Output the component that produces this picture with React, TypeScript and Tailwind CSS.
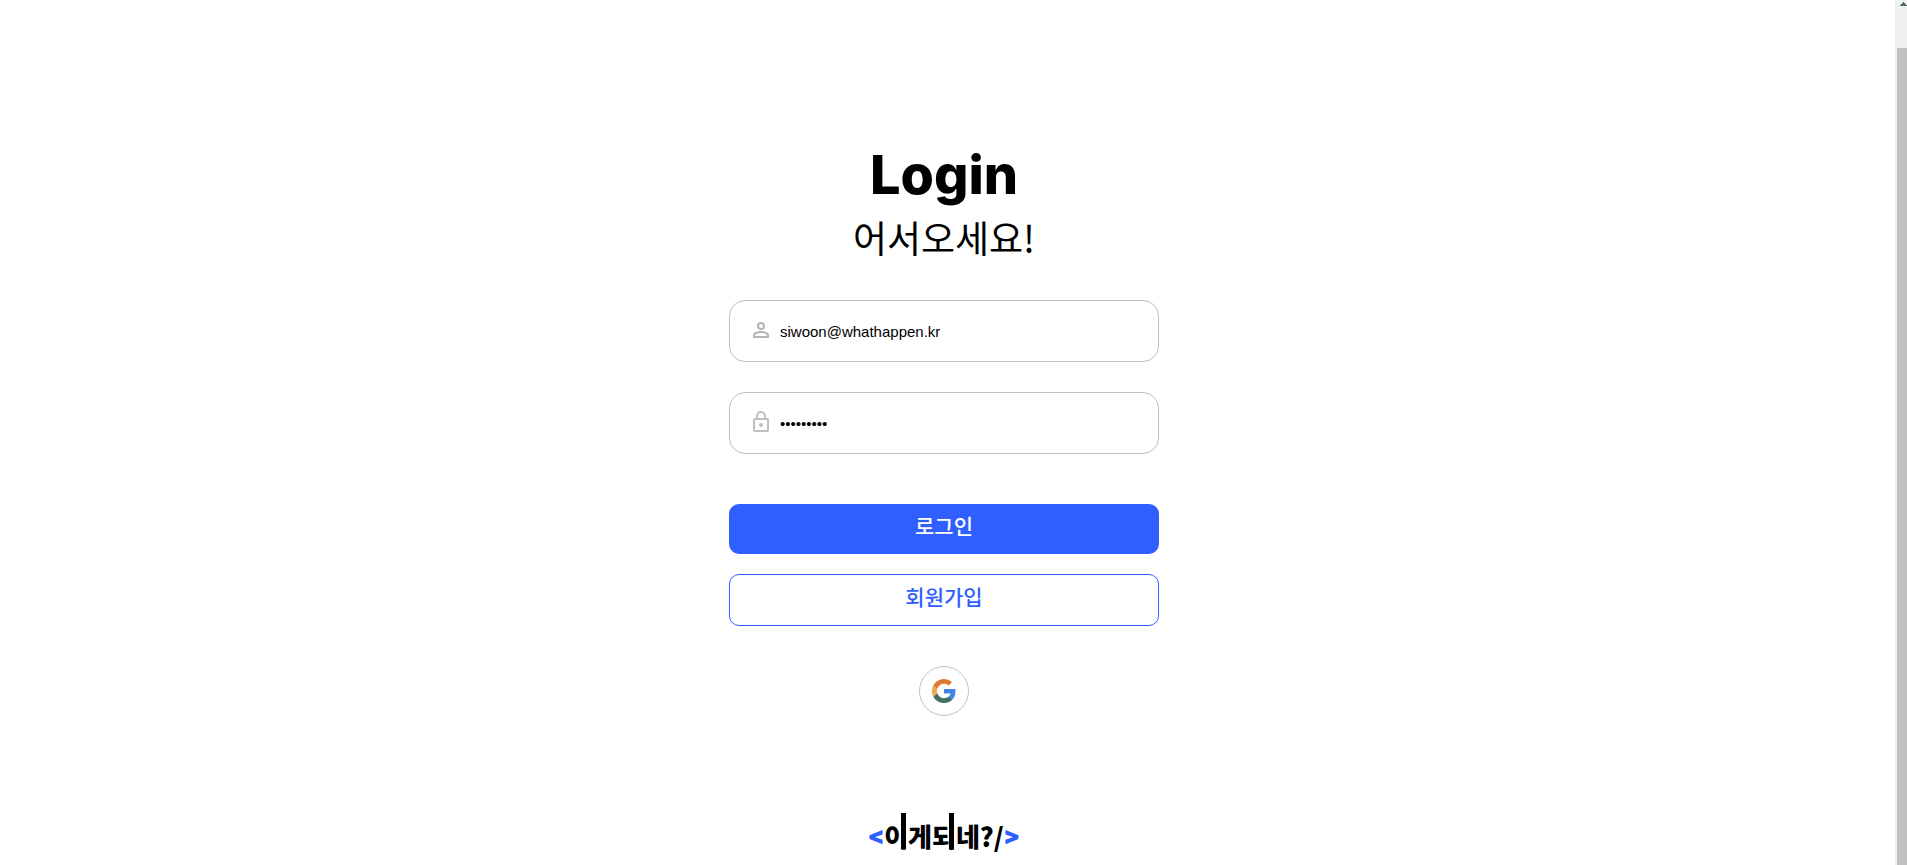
import { useState } from "react";

function PersonIcon() {
  return (
    <svg viewBox="4 4 16 16" className="size-4" fill="#b4b4b4" aria-hidden="true">
      <path d="M12 6a2 2 0 1 1 0 4 2 2 0 0 1 0-4m0 9c2.700 0 5.800 1.290 6 2v1H6v-1c.2-.71 3.300-2 6-2M12 4a4 4 0 1 0 0 8 4 4 0 0 0 0-8m0 9c-2.670 0-8 1.340-8 4v3h16v-3c0-2.660-5.330-4-8-4" />
    </svg>
  );
}

function LockIcon() {
  return (
    <svg viewBox="4 1 16 21" className="h-[21px] w-4" fill="#bfbfbf" aria-hidden="true">
      <path d="M18 8h-1V6A5 5 0 0 0 7 6v2H6a2 2 0 0 0-2 2v10a2 2 0 0 0 2 2h12a2 2 0 0 0 2-2V10a2 2 0 0 0-2-2M9 6a3 3 0 0 1 6 0v2H9zM18 20H6V10h12zm-6-3a2 2 0 1 0 0-4 2 2 0 0 0 0 4" />
    </svg>
  );
}

function GoogleIcon() {
  return (
    <svg viewBox="0 0 24 24" className="size-6" aria-hidden="true">
      <path fill="#4285e8" d="M23.500 12.300c0-.9-.1-1.500-.2-2.200H12v4.400h6.500c-.3 1.500-1.100 2.700-2.400 3.500v3h3.900c2.200-2.100 3.500-5.100 3.500-8.700z" />
      <path fill="#3f7060" d="M12 24c3.200 0 6-1.100 8-2.900l-3.900-3c-1.100.7-2.500 1.200-4.100 1.200-3.100 0-5.800-2.100-6.700-5l-4 3.100C3.300 21.300 7.300 24 12 24z" />
      <path fill="#f0a850" d="M5.300 14.300a7.200 7.200 0 0 1 0-4.600l-4-3.100a12 12 0 0 0 0 10.800z" />
      <path fill="#dd7b35" d="M12 4.800c1.800 0 3.300.6 4.600 1.800L20 3.200A12 12 0 0 0 1.300 6.600l4 3.100c.9-2.800 3.600-4.900 6.700-4.900z" />
    </svg>
  );
}

function Stem() {
  return <span className="absolute right-0.5 bottom-0 h-9 w-[5px] bg-black" />;
}

function Logo() {
  return (
    <a
      href="#"
      className="flex h-[60px] items-center font-['Noto_Sans_CJK_KR',sans-serif] text-[26px] leading-none font-black text-black"
    >
      <span className="font-[Roboto,sans-serif] text-[30px] text-[#2f5fff]">&lt;</span>
      <span className="relative">
        이
        <Stem />
      </span>
      <span>게</span>
      <span className="relative">
        되
        <Stem />
      </span>
      <span>네?/</span>
      <span className="font-[Roboto,sans-serif] text-[30px] text-[#2f5fff]">&gt;</span>
    </a>
  );
}

export default function App() {
  const [email, setEmail] = useState("siwoon@whathappen.kr");
  const [password, setPassword] = useState("whathappe");
  const field =
    "flex h-[62px] items-center gap-[11px] rounded-2xl border border-[#c0c0c0] px-[23px]";
  const input =
    "min-w-0 flex-1 bg-transparent pt-0.5 font-['Liberation_Sans',Arial,sans-serif] text-[15px] text-black outline-none";

  return (
    <div className="flex h-screen overflow-hidden bg-white">
      <main className="flex flex-1 flex-col items-center pt-[140px] pr-[7px] font-['Noto_Sans_CJK_KR',sans-serif]">
        <h1 className="font-[Inter,sans-serif] text-[54px] leading-[70px] font-extrabold text-black">Login</h1>
        <p className="text-[37px] leading-[54px] text-black">어서오세요!</p>

        <form className="mt-9 flex w-[430px] max-w-full flex-col" onSubmit={(e) => e.preventDefault()}>
          <label className={field}>
            <span className="pb-0.5">
              <PersonIcon />
            </span>
            <input
              type="email"
              aria-label="이메일"
              className={input}
              value={email}
              onChange={(e) => setEmail(e.target.value)}
            />
          </label>
          <label className={field + " mt-[30px]"}>
            <span className="pb-1">
              <LockIcon />
            </span>
            <input
              type="password"
              aria-label="비밀번호"
              className={input}
              value={password}
              onChange={(e) => setPassword(e.target.value)}
            />
          </label>
          <button
            type="submit"
            className="mt-[50px] h-[50px] rounded-[10px] bg-[#2f5fff] pb-1.5 text-[21px] font-medium text-white"
          >
            로그인
          </button>
          <button
            type="button"
            className="mt-5 h-[52px] rounded-[10px] border border-[#2f5fff] pb-1.5 text-[21px] font-medium text-[#2f5fff]"
          >
            회원가입
          </button>
        </form>

        <button
          type="button"
          aria-label="Google"
          className="mt-10 flex size-[50px] shrink-0 items-center justify-center rounded-full border border-[#c0c0c0]"
        >
          <GoogleIcon />
        </button>

        <footer className="mt-[90px]">
          <Logo />
        </footer>
      </main>

      <div className="flex w-3 flex-col bg-[#f0f0f0]" aria-hidden="true">
        <div className="flex h-12 justify-end pt-0.5">
          <svg viewBox="0 0 7 4" className="h-1 w-[7px]" fill="#4b6f62">
            <path d="M3 0h1v1h1v1h1v1h1v1H0V3h1V2h1V1h1z" />
          </svg>
        </div>
        <div className="ml-0.5 flex-1 bg-[#c1c1c1]" />
      </div>
    </div>
  );
}
